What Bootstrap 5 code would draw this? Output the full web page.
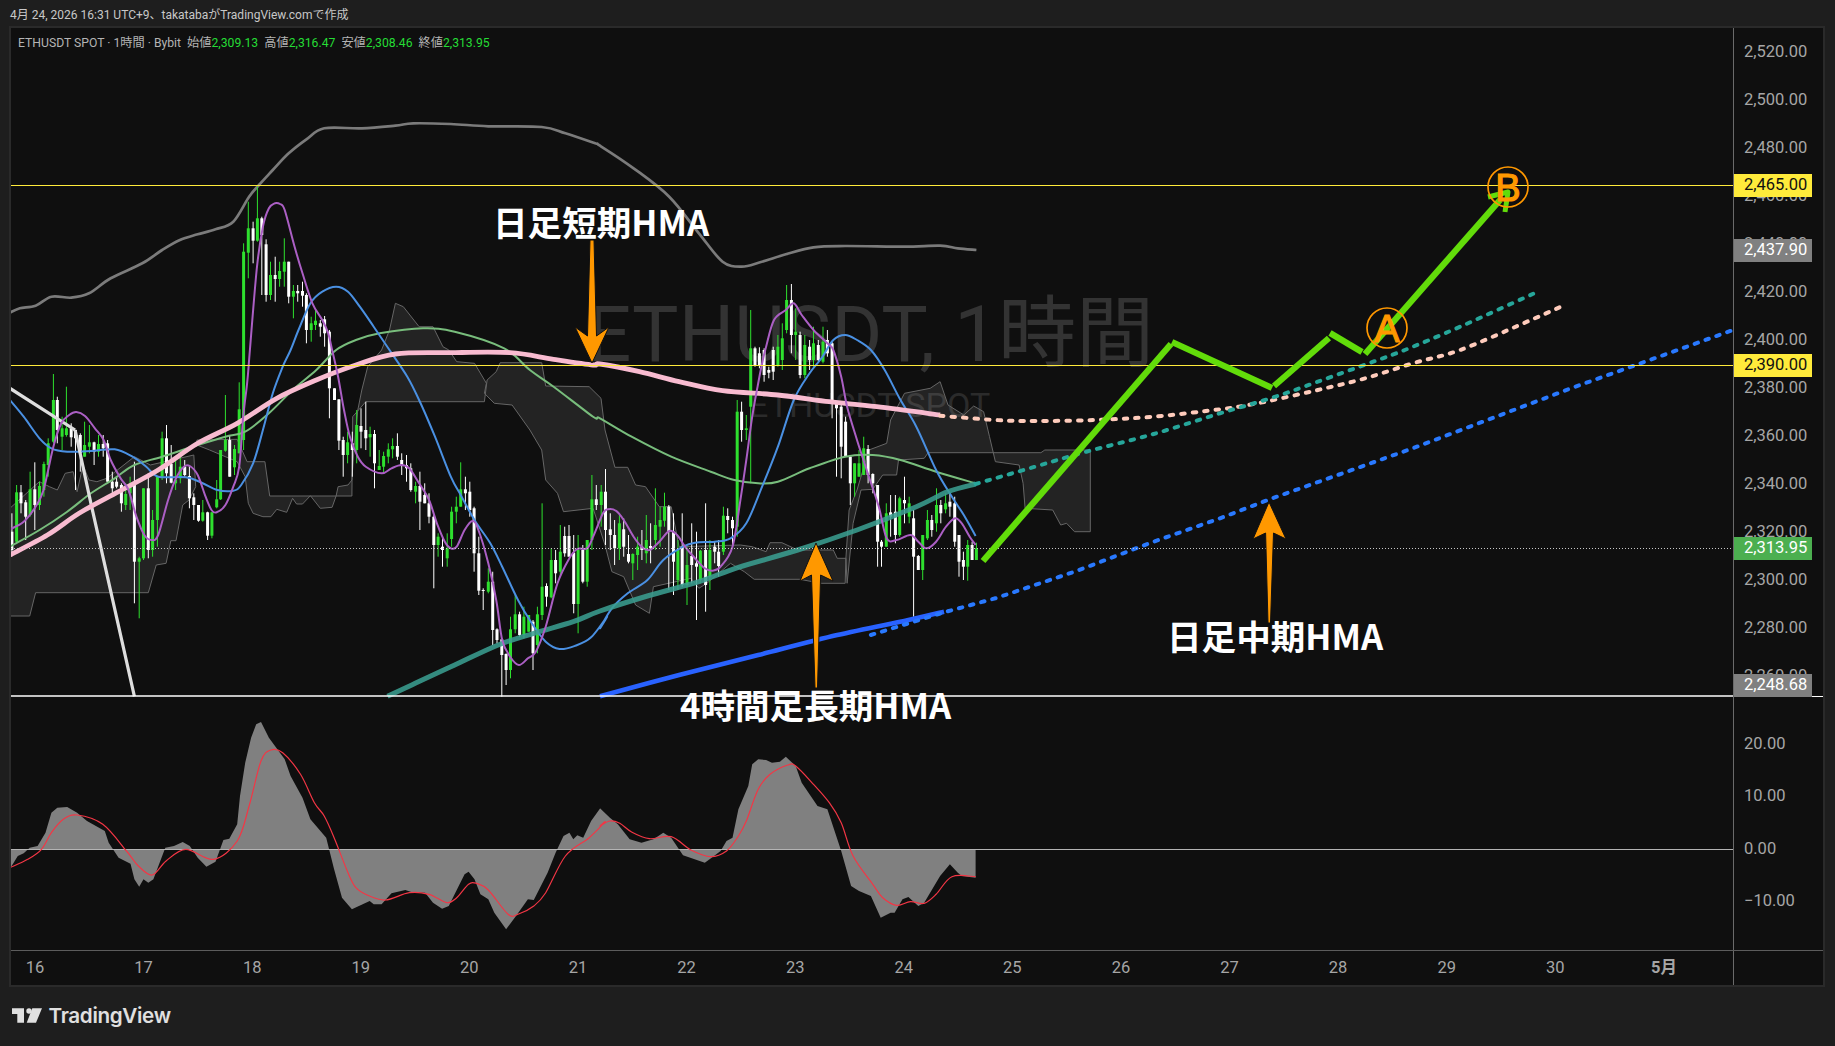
<!DOCTYPE html>
<html lang="ja">
<head>
<meta charset="utf-8">
<title>ETHUSDT SPOT</title>
<link rel="stylesheet" href="https://cdn.jsdelivr.net/npm/bootstrap@5.3.0/dist/css/bootstrap.min.css">
<style>
html,body{height:100%;}
body{background:#1e1e1e;font-family:Roboto,"Noto Sans CJK JP",sans-serif;overflow:hidden;}
.tv-page{width:1835px;height:1046px;}
.tv-head{height:26px;padding-left:10px;font-size:12px;color:#c8c8c8;line-height:30px;}
.tv-frame{margin-left:9px;width:1816px;height:961px;border:2px solid #2a2a2a;background:#0f0f0f;}
.tv-main{height:922px;}
.tv-canvas{width:1722px;height:922px;position:relative;}
.tv-canvas svg{display:block;}
.tv-legend{position:absolute;left:7px;top:6px;font-size:12.2px;color:#b4b4b4;white-space:pre;}
.tv-legend b{font-weight:400;color:#25dc35;}
.tv-axis{width:90px;border-left:1px solid #6a6a6a;color:#a6a6a6;font-size:16.5px;position:relative;}
.tv-price{height:668px;overflow:hidden;}
.tv-osc{height:254px;border-top:1px solid #fff;padding-top:21px;}
.tv-tick{padding-left:10px;}
.tv-price .tv-tick{height:48px;line-height:48px;}
.tv-osc .tv-tick{height:52.3px;line-height:52.3px;}
.tv-pill{position:absolute;left:0;width:78px;height:23px;line-height:22px;padding-left:10px;}
.tv-yellow{background:#ffeb3b;color:#111;}
.tv-gray{background:#808080;color:#fff;}
.tv-green{background:#4caf50;color:#fff;}
.tv-time{height:36px;border-top:1px solid #5c5c5c;color:#a6a6a6;font-size:16.5px;line-height:34px;overflow:hidden;}
.tv-days{width:1722px;overflow:hidden;}
.tv-day{flex:0 0 108.6px;text-align:center;}
.tv-day:first-child{margin-left:-30.3px;}
.tv-month{font-weight:700;}
.tv-corner{width:90px;border-left:1px solid #6a6a6a;}
.tv-foot{height:59px;padding:0 0 2px 12px;color:#e0e0e0;}
.tv-name{font-family:Inter,sans-serif;font-size:20.7px;font-weight:600;line-height:18px;letter-spacing:-.35px;margin-left:-2.5px;}
.tv-wm1{font-family:Roboto,"Noto Sans CJK JP",sans-serif;font-size:78px;fill:#333;}
.tv-wm2{font-family:Roboto,"Noto Sans CJK JP",sans-serif;font-size:34px;fill:#2b2b2b;}
.tv-note{font-family:"Noto Sans CJK JP",sans-serif;font-size:34.6px;font-weight:700;fill:#fff;}
.tv-letter{font-family:"Liberation Sans",sans-serif;font-size:38px;fill:#ff9800;stroke:#ff9800;stroke-width:1.2;}
</style>
</head>
<body>
<div class="tv-page d-flex flex-column">
  <div class="tv-head">4月 24, 2026 16:31 UTC+9、takatabaがTradingView.comで作成</div>
  <div class="tv-frame d-flex flex-column">
    <div class="tv-main d-flex">
      <div class="tv-canvas">
        <svg id="chart" width="1722" height="922" viewBox="11 28 1722 922" xmlns="http://www.w3.org/2000/svg"></svg>
        <div class="tv-legend">ETHUSDT SPOT · 1時間 · Bybit  始値<b>2,309.13</b>  高値<b>2,316.47</b>  安値<b>2,308.46</b>  終値<b>2,313.95</b></div>
      </div>
      <div class="tv-axis d-flex flex-column">
        <div class="tv-price">
          <div class="tv-tick">2,520.00</div><div class="tv-tick">2,500.00</div><div class="tv-tick">2,480.00</div>
          <div class="tv-tick">2,460.00</div><div class="tv-tick">2,440.00</div><div class="tv-tick">2,420.00</div>
          <div class="tv-tick">2,400.00</div><div class="tv-tick">2,380.00</div><div class="tv-tick">2,360.00</div>
          <div class="tv-tick">2,340.00</div><div class="tv-tick">2,320.00</div><div class="tv-tick">2,300.00</div>
          <div class="tv-tick">2,280.00</div><div class="tv-tick">2,260.00</div>
        </div>
        <div class="tv-osc">
          <div class="tv-tick">20.00</div><div class="tv-tick">10.00</div><div class="tv-tick">0.00</div><div class="tv-tick">−10.00</div>
        </div>
        <div class="tv-pill tv-yellow" style="top:146px">2,465.00</div>
        <div class="tv-pill tv-gray" style="top:211px">2,437.90</div>
        <div class="tv-pill tv-yellow" style="top:326px">2,390.00</div>
        <div class="tv-pill tv-green" style="top:509px">2,313.95</div>
        <div class="tv-pill tv-gray" style="top:646px">2,248.68</div>
      </div>
    </div>
    <div class="tv-time d-flex">
      <div class="tv-days d-flex">
        <span class="tv-day">16</span><span class="tv-day">17</span><span class="tv-day">18</span><span class="tv-day">19</span><span class="tv-day">20</span><span class="tv-day">21</span><span class="tv-day">22</span><span class="tv-day">23</span><span class="tv-day">24</span><span class="tv-day">25</span><span class="tv-day">26</span><span class="tv-day">27</span><span class="tv-day">28</span><span class="tv-day">29</span><span class="tv-day">30</span><span class="tv-day tv-month">5月</span>
      </div>
      <div class="tv-corner"></div>
    </div>
  </div>
  <div class="tv-foot d-flex align-items-center gap-2">
    <svg width="31" height="15" viewBox="12 1008 31 15" xmlns="http://www.w3.org/2000/svg" fill="#e0e0e0"><path d="M12 1008.3H24V1022.7H17.3V1014H12Z"/><circle cx="29" cy="1011" r="2.7"/><path d="M32.3 1008.3H42L36 1022.7H26.7Z"/></svg>
    <span class="tv-name">TradingView</span>
  </div>
</div>
<script>
const K=2.529;
const F={A:[0,0],B:[0,350],C:[600,350],D:[0,696],E:[600,696],R:[1215,350],H:[1215,0],G:[600,0]};
const P=(f,a)=>a.map(p=>[F[f][0]+p[0]/K,F[f][1]+p[1]/3]);
const rnd=n=>Math.round(n*10)/10;
const line=pts=>'M'+pts.map(p=>rnd(p[0])+' '+rnd(p[1])).join('L');
function smooth(pts){let d='M'+rnd(pts[0][0])+' '+rnd(pts[0][1]);
 for(let i=0;i<pts.length-1;i++){const a=pts[Math.max(i-1,0)],b=pts[i],c=pts[i+1],e=pts[Math.min(i+2,pts.length-1)];
  d+='C'+rnd(b[0]+(c[0]-a[0])/6)+' '+rnd(b[1]+(c[1]-a[1])/6)+' '+rnd(c[0]-(e[0]-b[0])/6)+' '+rnd(c[1]-(e[1]-b[1])/6)+' '+rnd(c[0])+' '+rnd(c[1]);}
 return d;}
const path=(d,c,w,x='')=>`<path d="${d}" fill="none" stroke="${c}" stroke-width="${w}" stroke-linejoin="round" ${x}/>`;
let s='';
s+='<text class="tv-wm1" x="587" y="361">ETHUSDT, 1時間</text><text class="tv-wm2" x="749" y="417">ETHUSDT SPOT</text>';

/* cloud */
const cloud=[
 P('B',[[25,475],[90,405],[100,395],[125,410],[145,420],[165,370],[185,365],[195,425],[210,345],[225,390],[245,395],[270,385],[340,320],[380,345],[490,315],[495,410],[478,450],[462,465],[445,572],[432,572],[420,640],[395,645],[375,728],[90,728],[75,798],[25,798]]),
 P('B',[[498,270],[600,268],[625,335],[670,335],[682,438],[890,438],[892,200],[925,155],[1225,155],[1232,90],[1255,65],[1265,38],[1370,38],[1380,108],[1490,110],[1520,145],[1530,240],[1555,352]]).concat(
 P('C',[[70,352],[90,405],[115,410],[150,470],[180,470],[200,590],[355,585],[385,590],[420,605],[430,578],[460,578],[500,600],[590,600],[600,625],[622,625],[620,700],[560,700],[505,688],[390,688],[365,665],[330,640],[270,700],[250,715],[230,685],[135,710],[125,790],[90,765],[60,680],[30,665]]),
 P('B',[[1530,585],[1500,475],[1425,485],[1410,430],[1380,390],[1370,300],[1340,240],[1295,165],[1250,160],[1225,130],[1230,100],[1200,40],[1155,35],[1135,0],[1120,-10],[1095,-70],[1060,-70],[1020,-130],[1000,-140],[985,-60],[965,0],[930,50],[915,120],[905,180],[895,300],[890,390],[880,405],[855,410],[850,438],[840,472],[810,475],[785,437],[765,462],[750,462],[740,445],[725,487],[700,478],[685,500],[665,500],[640,490],[628,460],[620,380],[600,335],[530,300],[498,285]])),
 P('C',[[622,625],[630,480],[650,420],[680,300],[725,280],[735,210],[770,130],[835,115],[860,95],[880,165],[920,195],[945,168],[970,185],[985,260],[1000,335],[1060,345],[1070,400],[1075,475],[1145,480],[1165,525],[1180,520],[1200,545],[1240,545],[1240,300],[1125,300],[1115,308],[830,308],[820,325],[755,330],[750,375],[715,375],[690,418],[660,420],[640,520],[625,700]])
];
cloud.forEach(c=>{s+=`<path d="${line(c)}Z" fill="#fff" fill-opacity=".085" stroke="#666" stroke-width="1"/>`;});

/* bollinger */
s+=path(smooth(P('A',[[25,938],[50,925],[90,917],[130,890],[180,893],[225,880],[280,835],[360,790],[410,750],[455,720],[500,703],[545,688],[590,665],[630,590],[655,555],[690,510],[730,460],[775,418],[820,385],[915,385],[1000,377],[1045,370],[1140,372],[1235,379],[1370,381],[1430,400],[1505,430]]).concat(P('G',[[0,437],[85,505],[175,590],[250,700],[310,785],[358,800],[405,787],[470,763],[540,742],[620,738],[770,740],[860,737],[905,745],[952,750]]))),'#7b7b7b',2.7);

/* candles: [x, high, bodyTop, bodyBottom, low, green?] */
const cB=[[30,490,545,600,610,0],[42,405,427,575,580,1],[53,405,427,460,490,0],[65,450,457,500,570,0],[76,365,418,495,500,1],[88,337,418,465,540,0],[100,395,408,465,480,1],[111,335,342,420,440,1],[122,265,280,345,380,1],[135,72,150,275,280,1],[145,140,150,240,280,0],[157,200,235,260,300,1],[168,110,235,255,260,1],[180,220,235,262,290,0],[191,240,240,265,420,0],[203,250,255,310,365,0],[214,215,285,320,320,1],[226,225,277,290,310,1],[238,275,277,305,345,0],[249,255,282,305,320,1],[261,255,282,295,320,0],[272,270,280,395,395,0],[284,365,395,415,440,0],[295,380,395,410,415,0],[307,400,405,460,485,0],[318,400,432,465,480,1],[329,380,402,430,480,1],[340,335,402,635,760,0],[352,620,625,635,805,1],[363,415,415,625,630,1],[375,370,415,600,625,0],[386,480,510,600,620,1],[398,380,380,510,590,1],[410,245,265,380,390,1],[421,225,265,370,400,0],[433,285,342,398,400,0],[444,330,390,400,420,1],[456,300,350,385,400,1],[467,330,350,375,380,0],[479,345,378,445,475,0],[490,430,442,465,510,0],[502,465,465,512,515,0],[513,450,487,512,515,1],[525,485,487,557,570,0],[536,485,487,557,565,1],[548,390,448,472,475,1],[558,300,300,448,450,1],[570,135,270,302,305,1],[581,255,270,380,380,0],[593,285,297,352,375,1],[605,97,178,310,310,1],[616,-320,-295,270,300,1],[628,-445,-365,-292,-215,1],[640,-385,-365,-328,-260,0],[651,-490,-395,-328,-325,1],[662,-400,-395,-345,-165,0],[673,-332,-317,-165,-145,0],[684,-265,-225,-165,-150,1],[696,-280,-225,-213,-145,0],[707,-265,-237,-213,-190,1],[719,-335,-265,-235,-190,1],[730,-265,-265,-160,-140,0],[742,-195,-177,-160,-95,1],[753,-195,-177,-170,-145,0],[765,-205,-177,-163,-130,0],[775,-170,-165,-60,-20,0],[787,-100,-80,-60,-25,1],[798,-125,-88,-75,-60,1],[810,-90,-80,-70,-40,0],[821,-102,-92,-50,-10,0],[833,-60,-55,115,205,0],[846,115,115,150,150,0],[857,148,148,272,300,0],[868,260,270,315,380,0],[879,245,277,315,340,1],[891,245,280,300,380,0],[902,180,225,300,340,1],[913,175,228,245,295,0],[925,155,240,265,300,0],[936,230,252,262,320,1],[947,240,252,340,415,0],[959,300,348,360,360,1],[970,305,318,350,370,1],[982,280,298,320,340,1],[993,265,288,298,325,1],[1005,250,288,320,330,0],[1016,310,330,345,375,0],[1028,315,345,355,395,0],[1039,340,355,420,425,0],[1051,395,408,425,460,1],[1062,365,408,455,540,0],[1074,400,435,460,460,0],[1085,430,460,500,520,0],[1097,495,500,585,715,0],[1108,550,560,585,620,1],[1119,560,590,600,650,0],[1131,550,595,625,650,1],[1142,470,485,567,590,1],[1154,440,470,485,520,1],[1165,337,418,470,470,1],[1177,380,418,430,480,0],[1188,395,425,480,500,0],[1199,470,475,610,665,0],[1211,560,610,722,735,0],[1222,715,720,722,780,0],[1235,655,695,725,730,1],[1246,665,695,840,885,0],[1257,835,838,870,880,0],[1269,865,868,915,1040,0],[1280,910,912,960,1005,0],[1291,800,838,960,985,1],[1303,735,793,838,850,1],[1314,785,793,855,860,0],[1325,770,800,855,865,1],[1337,795,795,845,845,1],[1348,810,815,910,960,0],[1359,770,793,885,910,1],[1371,460,710,795,810,1],[1382,700,708,740,770,0],[1394,595,630,742,745,1],[1405,600,630,670,700,0],[1417,525,605,665,680,1],[1428,530,558,610,620,0],[1439,525,558,620,620,0],[1451,555,608,762,790,0],[1462,555,600,762,850,1],[1474,585,600,695,700,0],[1485,570,570,695,710,1],[1497,375,448,570,600,1],[1508,405,448,465,480,0]];
const cC=[[3,405,425,465,530,1],[14,357,425,540,585,0],[26,490,538,555,600,0],[37,510,555,595,645,0],[49,490,520,595,630,1],[60,505,538,590,620,0],[72,555,612,635,640,0],[83,610,612,640,690,1],[95,560,590,615,660,1],[106,540,590,600,630,0],[117,495,570,610,640,1],[128,520,588,595,640,0],[140,415,525,570,600,1],[152,470,510,530,590,1],[163,428,470,512,530,1],[174,465,470,545,720,0],[186,490,545,635,735,0],[197,570,600,690,720,1],[208,490,590,705,710,0],[220,590,645,705,765,1],[232,520,618,645,700,0],[244,545,640,650,810,0],[254,600,602,690,700,1],[267,460,600,705,785,0],[278,570,600,680,720,1],[290,575,590,605,640,0],[300,570,605,648,680,0],[312,470,497,605,615,1],[323,475,498,510,550,0],[335,500,510,535,590,0],[347,150,185,530,560,1],[358,155,185,240,275,0],[370,195,235,240,270,1],[381,-120,-5,170,400,1],[392,-10,-5,45,50,0],[403,-8,10,45,55,0],[415,-5,0,75,95,0],[427,50,60,68,85,0],[438,-10,0,65,90,0],[450,-45,-10,45,50,1],[461,-80,-35,30,60,1],[472,-195,-150,-60,-50,1],[484,-198,-150,-45,10,0],[495,-125,-55,-45,30,1],[506,-55,-45,75,85,0],[518,-45,-15,75,85,1],[530,-30,-10,30,60,0],[540,-70,-20,30,50,1],[552,-30,-15,30,35,0],[564,-70,-25,35,40,1],[575,-60,-30,10,20,0],[587,-25,-20,155,205,0],[598,155,155,175,380,0],[610,160,170,290,385,0],[621,200,215,320,320,0],[633,320,320,400,465,0],[644,340,340,400,440,1],[655,300,340,380,380,1],[667,260,295,375,375,1],[678,285,297,375,400,0],[690,370,372,400,430,0],[702,405,405,575,650,0],[712,570,575,590,650,0],[724,460,490,590,590,1],[735,435,487,500,560,0],[747,435,485,555,580,0],[758,440,445,555,560,1],[770,380,450,460,520,0],[782,440,460,500,520,1],[793,480,505,620,800,0],[805,615,618,660,660,0],[816,555,555,660,690,1],[828,480,510,565,570,1],[839,495,510,540,560,0],[851,415,465,520,545,1],[862,450,465,490,520,0],[874,430,460,478,490,1],[885,430,455,470,500,0],[897,440,460,575,590,0],[908,555,555,635,680,0],[919,605,630,650,690,0],[930,570,585,650,692,1],[941,575,585,630,630,0],[952,578,595,630,630,1]];
function candles(f,list){list.forEach(c=>{const x=rnd(F[f][0]+c[0]/K),col=c[5]?'#2ee02e':'#fff',y=v=>rnd(F[f][1]+v/3);
 const t=y(c[2]),b=Math.max(y(c[3]),t+1);
 s+=`<rect x="${rnd(x-.5)}" y="${y(c[1])}" width="1" height="${rnd(y(c[4])-y(c[1]))}" fill="${col}"/><rect x="${rnd(x-1.5)}" y="${t}" width="3" height="${rnd(b-t)}" fill="${col}"/>`;});}
candles('B',cB);candles('C',cC);

/* indicator lines */
s+=path(smooth(P('B',[[25,590],[100,540],[170,485],[230,430],[290,385],[340,345],[410,320],[500,285],[570,260],[620,245],[680,190],[740,120],[800,60],[850,0],[900,-30],[960,-50],[1070,-65],[1150,-55],[1275,-5],[1340,60],[1400,110],[1500,200]]).concat(P('C',[[0,205],[80,260],[180,320],[280,365],[340,390],[400,400],[450,395],[530,355],[620,320],[690,315],[760,330],[850,365],[950,400]]))),'#78bd7c',2);
s+=path(smooth(P('B',[[25,150],[60,200],[100,265],[130,295],[170,305],[230,303],[290,298],[335,320],[370,350],[400,380],[470,382],[510,398],[550,420],[590,422],[610,405],[640,340],[665,240],[690,130],[715,50],[735,0],[755,-60],[785,-140],[815,-175],[850,-190],[880,-175],[910,-130],[945,-70],[985,0],[1030,80],[1060,150],[1100,260],[1140,380],[1165,435],[1200,510],[1240,580],[1270,650],[1310,750],[1345,820],[1380,875],[1415,897],[1455,887],[1495,862],[1535,800]]).concat(P('C',[[0,835],[30,775],[70,730],[120,690],[160,630],[210,590],[240,578],[290,575],[330,565],[370,520],[410,410],[450,290],[490,150],[530,70],[560,25],[590,-30],[620,-45],[650,-30],[685,0],[720,60],[760,150],[800,230],[850,360],[890,440],[920,495],[950,558]]))),'#4a90e2',2);
s+=path(smooth(P('B',[[25,115],[190,240]])),'#dedede',3.2);
s+=path(line(P('B',[[190,240],[230,460],[340,1039]])),'#dedede',3.2);
s+=path(smooth(P('B',[[25,615],[120,555],[200,490],[300,425],[400,360],[500,280],[600,220],[700,145],[800,90],[900,45],[1000,12],[1140,8],[1290,8],[1400,28],[1500,45]]).concat(P('C',[[0,42],[100,65],[200,95],[310,122],[450,135],[580,155],[700,170],[860,195]]))),'#f8bbd0',4.8);
s+=path(smooth(P('B',[[980,1039],[1050,1000],[1150,945],[1260,885],[1350,850],[1450,815]]).concat(P('C',[[0,783],[120,738],[250,695],[350,652],[500,600],[650,540],[800,470],[880,425],[950,402]]))),'#3a9d8f',5,'stroke-opacity=".88"');
s+=path(smooth(P('C',[[0,1039],[200,975],[400,915],[600,855],[780,810],[870,785]])),'#2962ff',4.6);
/* purple fast HMA */
s+=path(smooth(P('B',[[25,538],[60,515],[90,470],[110,420],[135,290],[155,220],[175,195],[193,186],[215,198],[240,235],[262,270],[280,330],[305,385],[325,420],[345,500],[365,555],[383,570],[400,555],[425,450],[445,385],[465,350],[480,348],[500,375],[520,440],[535,480],[548,487],[570,465],[590,410],[605,350],[615,200],[625,100],[632,0],[650,-250],[665,-370],[680,-425],[695,-440],[708,-438],[720,-420],[745,-310],[765,-230],[790,-140],[815,-90],[830,-50],[840,0],[855,80],[870,180],[885,260],[905,320],[925,350],[965,370],[990,355],[1015,345],[1035,355],[1060,400],[1085,450],[1105,520],[1125,575],[1140,595],[1155,590],[1175,540],[1195,513],[1210,540],[1235,640],[1255,750],[1270,870],[1290,920],[1312,945],[1335,925],[1355,905],[1380,830],[1410,700],[1440,625],[1460,597],[1485,595],[1500,560],[1525,490]]).concat(P('C',[[20,478],[40,482],[60,510],[85,560],[105,590],[125,600],[150,575],[175,543],[195,555],[215,590],[240,625],[265,655],[285,662],[305,650],[335,590],[355,450],[370,330],[385,200],[400,100],[410,40],[420,-10],[440,-90],[470,-120],[490,-140],[510,-105],[540,-60],[575,-20],[590,0],[610,80],[625,170],[650,270],[680,380],[705,470],[725,565],[750,570],[785,555],[805,575],[825,595],[850,575],[875,530],[898,505],[915,520],[935,560],[950,585]]))),'#ab5fc4',2);
const dash='stroke-dasharray="3.5 8" stroke-linecap="round"';
s+=path(smooth(P('C',[[860,197],[1000,210],[1100,213],[1250,210],[1400,200],[1568,178]]).concat(P('R',[[60,170],[140,152],[260,120],[380,85],[500,40],[620,0]]),P('H',[[780,970],[875,920]]))),'#ffccbc',4,dash);
s+=path(smooth(P('C',[[950,402],[1100,350],[1230,305],[1400,252],[1568,190]]).concat(P('R',[[140,145],[260,95],[400,35],[480,0]]),P('H',[[620,980],[820,873]]))),'#26a69a',4,dash);
s+=path(line(P('C',[[685,855],[870,787],[1000,745],[1200,665],[1400,575],[1568,505]]).concat(P('R',[[140,447],[500,295],[900,115],[1170,0]]),P('H',[[1310,990]]))),'#2979ff',4,dash);

/* zero lines, price lines */
s+='<path d="M11 185.5H1733M11 365.5H1733" stroke="#ffeb3b" stroke-width="1.2"/>';
s+='<path d="M11 548.5H1733" stroke="#c8c8c8" stroke-width="1" stroke-dasharray="1 2"/>';
s+='<path d="M11 696H1733" stroke="#fff" stroke-width="1.5"/>';

/* oscillator */
const top1=P('D',[[25,518],[45,480],[60,472],[75,455],[95,450],[115,410],[130,350],[145,335],[170,333],[195,350],[220,375],[265,405],[275,440],[300,485],[330,503],[340,550],[352,572],[363,550],[375,560],[388,550],[418,455],[440,450],[462,438],[480,450],[500,485],[522,512],[545,497],[565,432],[580,428],[600,385],[607,300],[620,200],[635,125],[648,85],[660,78],[680,125],[720,190],[735,240],[765,305],[785,370],[825,425],[845,520],[865,605],[890,640],[935,615],[945,625],[965,625],[990,592],[1025,582],[1040,588],[1075,590],[1095,620],[1118,638],[1135,630],[1160,570],[1175,535],[1185,527],[1200,550],[1215,595],[1235,610],[1250,650],[1280,700],[1305,660],[1335,610],[1350,612],[1385,530],[1405,470],[1425,420],[1440,410],[1450,430],[1460,418],[1475,425],[1495,375],[1518,337]]);
const top2=P('E',[[0,337],[25,365],[45,385],[75,430],[105,440],[135,430],[160,410],[180,425],[210,478],[265,500],[285,483],[305,465],[320,435],[335,425],[350,340],[375,270],[385,205],[400,190],[420,192],[435,200],[455,197],[470,182],[495,210],[510,260],[550,330],[575,340],[610,465],[635,570],[655,585],[685,600],[710,665],[735,650],[745,650],[765,610],[780,603],[805,630],[820,620],[860,540],[885,505],[905,530],[915,540],[950,545],[950,460]]);
s+=`<path d="${line(P('D',[[25,460]]).concat(top1,top2))}Z" fill="#808080"/>`;
s+='<path d="M11 849.5H1733" stroke="#b4b4b4" stroke-width="1"/>';
s+=path(smooth(P('D',[[25,515],[70,490],[105,460],[130,410],[160,370],[195,357],[260,385],[320,465],[350,510],[385,537],[420,495],[470,460],[540,490],[600,435],[630,330],[660,195],[685,162],[715,170],[760,235],[795,320],[820,360],[845,425],[880,530],[900,575],[930,598],[975,612],[1035,590],[1085,595],[1130,620],[1155,605],[1185,565],[1205,562],[1235,582],[1285,655],[1310,655],[1350,630],[1380,590],[1430,480],[1490,425],[1530,378]]).concat(P('E',[[0,390],[25,375],[50,382],[80,408],[125,428],[180,422],[230,462],[280,482],[320,465],[350,420],[370,375],[400,280],[430,235],[475,207],[495,210],[540,265],[580,320],[610,380],[640,480],[690,565],[715,605],[750,628],[785,617],[820,622],[850,595],[890,542],[950,542]]))),'#f23645',1.2);

/* forecast */
const seg=(a,b,c,d)=>path(`M${a} ${b}L${c} ${d}`,'#62dc0a',6.3);
s+=seg(983,561,1171,344)+seg(1172,342,1272,388)+seg(1274,386,1329,338)+seg(1330,333,1362,352)+seg(1365,354,1500,200);
s+=path('M1488 197L1508 192L1505 212','#62dc0a',5);
/* arrows */
const arrow=p=>`<polygon points="${p}" fill="#ff9800" stroke="#111" stroke-width="1"/>`;
s+=arrow('590,240 594,240 596.5,336 609,327 592,363 575,327 587.5,336');
s+=arrow('815,688 817.5,688 820.6,575 833,581 816,543 800,581 811.5,575');
s+=arrow('1268,623 1270.5,623 1273.5,533 1286,539 1269,502 1253,539 1265.6,533');
/* markers */
s+='<circle cx="1387" cy="328" r="20" fill="none" stroke="#ff9800" stroke-width="1.7"/><text class="tv-letter" x="1387" y="341.5" text-anchor="middle">A</text>';
s+='<circle cx="1508" cy="187" r="20" fill="none" stroke="#ff9800" stroke-width="1.7"/><text class="tv-letter" x="1508" y="200.5" text-anchor="middle">B</text>';
/* notes */
s+='<text class="tv-note" x="493" y="236">日足短期HMA</text><text class="tv-note" x="1167" y="650">日足中期HMA</text><text class="tv-note" x="680" y="719">4時間足長期HMA</text>';
document.getElementById('chart').innerHTML=s;
</script>
<script src="https://cdn.jsdelivr.net/npm/bootstrap@5.3.0/dist/js/bootstrap.bundle.min.js"></script>
</body>
</html>
